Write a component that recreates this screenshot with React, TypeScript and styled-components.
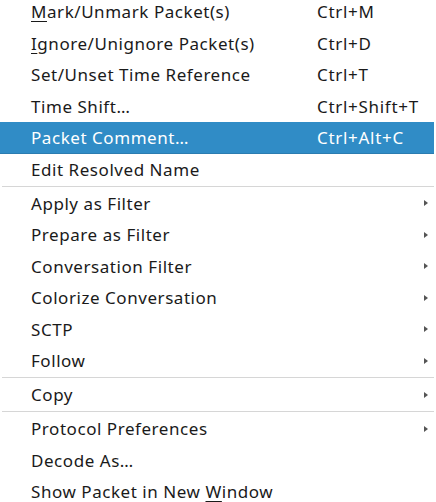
import React from "react";
import styled, { createGlobalStyle } from "styled-components";

const Global = createGlobalStyle`
  html, body {
    margin: 0;
    padding: 0;
    background: #ffffff;
    overflow: hidden;
  }
`;

const Menu = styled.div`
  width: 434px;
  margin-top: -4px;
  display: flex;
  flex-direction: column;
  font-family: "Noto Sans", "Open Sans", sans-serif;
  font-size: 17px;
  color: #1a1a1a;
`;

const Row = styled.div<{ $active?: boolean }>`
  height: 31.5px;
  box-sizing: border-box;
  display: grid;
  grid-template-columns: 286px 1fr 10px;
  align-items: center;
  padding-left: 31px;
  background: ${(p) => (p.$active ? "#308cc6" : "transparent")};
  color: ${(p) => (p.$active ? "#ffffff" : "inherit")};
  border-bottom: ${(p) => (p.$active ? "1px solid #2b7cb0" : "none")};
`;

const Label = styled.span`
  white-space: nowrap;
  letter-spacing: 0.55px;
`;

const Shortcut = styled.span`
  white-space: nowrap;
  letter-spacing: 0.7px;
`;

const Mnemonic = styled.span`
  text-decoration: underline;
  text-underline-offset: 3px;
  text-decoration-thickness: 1px;
`;

const Arrow = styled.span`
  width: 0;
  height: 0;
  border-top: 3.5px solid transparent;
  border-bottom: 3.5px solid transparent;
  border-left: 4px solid #555555;
  justify-self: start;
`;

const Separator = styled.div`
  height: 2.5px;
  display: flex;
  align-items: center;
  padding-left: 2px;

  &::after {
    content: "";
    flex: 1;
    height: 1px;
    background: #d6d6d6;
  }
`;

type Item = {
  label: React.ReactNode;
  shortcut?: string;
  sub?: boolean;
  active?: boolean;
};

const groups: Item[][] = [
  [
    { label: <><Mnemonic>M</Mnemonic>ark/Unmark Packet(s)</>, shortcut: "Ctrl+M" },
    { label: <><Mnemonic>I</Mnemonic>gnore/Unignore Packet(s)</>, shortcut: "Ctrl+D" },
    { label: "Set/Unset Time Reference", shortcut: "Ctrl+T" },
    { label: "Time Shift…", shortcut: "Ctrl+Shift+T" },
    { label: "Packet Comment…", shortcut: "Ctrl+Alt+C", active: true },
    { label: "Edit Resolved Name" },
  ],
  [
    { label: "Apply as Filter", sub: true },
    { label: "Prepare as Filter", sub: true },
    { label: "Conversation Filter", sub: true },
    { label: "Colorize Conversation", sub: true },
    { label: "SCTP", sub: true },
    { label: "Follow", sub: true },
  ],
  [{ label: "Copy", sub: true }],
  [
    { label: "Protocol Preferences", sub: true },
    { label: "Decode As…" },
    { label: <>Show Packet in New <Mnemonic>W</Mnemonic>indow</> },
  ],
];

export default function App() {
  return (
    <>
      <Global />
      <Menu>
        {groups.map((group, gi) => (
          <React.Fragment key={gi}>
            {gi > 0 && <Separator />}
            {group.map((item, i) => (
              <Row key={i} $active={item.active}>
                <Label>{item.label}</Label>
                <Shortcut>{item.shortcut}</Shortcut>
                {item.sub ? <Arrow /> : <span />}
              </Row>
            ))}
          </React.Fragment>
        ))}
      </Menu>
    </>
  );
}
